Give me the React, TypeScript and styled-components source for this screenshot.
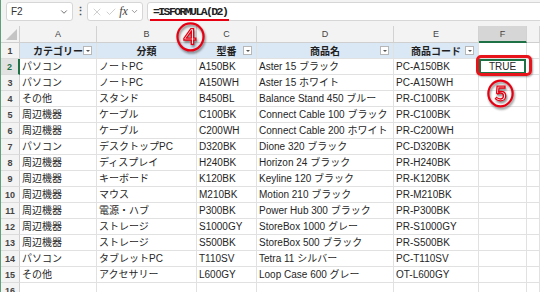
import styled, { createGlobalStyle } from "styled-components";
import { X, Check, ChevronDown } from "lucide-react";

const GlobalStyle = createGlobalStyle`
  html, body {
    margin: 0;
    padding: 0;
    background: #fff;
  }
  body {
    font-family: "Liberation Sans", "Noto Sans CJK JP", sans-serif;
    color: #222;
  }
`;

const Sheet = styled.div`
  position: relative;
  width: 540px;
  height: 292px;
  overflow: hidden;
  background: #fff;
  border-left: 1px solid #5f9f7c;
  box-sizing: border-box;
`;

const Toolbar = styled.div`
  display: flex;
  align-items: center;
  height: 26px;
  padding: 0 0 3px 5px;
  box-sizing: border-box;
  background: #f3f3f3;
  overflow: hidden;
`;

const Box = styled.div<{ $width?: number }>`
  display: flex;
  align-items: center;
  height: 19px;
  box-sizing: border-box;
  background: #fff;
  border: 1px solid #d6d6d6;
  border-radius: 3px;
  ${(p) => (p.$width ? `width: ${p.$width}px;` : "flex: 1; margin-right: -6px;")}
`;

const NameText = styled.span`
  flex: 1;
  padding-left: 4px;
  font-size: 10px;
  color: #333;
`;

const Dots = styled.span`
  width: 14px;
  text-align: center;
  font-size: 11px;
  font-weight: bold;
  color: #555;
`;

const FuncBox = styled(Box)`
  justify-content: space-around;
  padding: 0 2px;
  color: #b5b5b5;
`;

const FormulaBox = styled(Box)`
  margin-left: 4px;
`;

const Fx = styled.span`
  font-family: "Liberation Serif", serif;
  font-style: italic;
  font-size: 12px;
  color: #444;
`;

const Formula = styled.span`
  position: relative;
  margin-left: 5px;
  font-family: "Liberation Mono", monospace;
  font-weight: bold;
  font-size: 11.5px;
  letter-spacing: -1.6px;
  color: #222;
`;

const Underline = styled.span`
  position: absolute;
  left: -3px;
  right: -2px;
  bottom: -3px;
  height: 2px;
  background: #e60012;
`;

const Grid = styled.div`
  display: grid;
  grid-template-columns: 19px 77px 100px 60px 137px 85px 48px 1fr;
  grid-template-rows: 17px;
  grid-auto-rows: 16px;
`;

const Cell = styled.div`
  box-sizing: border-box;
  border-right: 1px solid #e1e1e1;
  border-bottom: 1px solid #e1e1e1;
  padding-left: 2px;
  font-size: 10px;
  line-height: 15px;
  white-space: nowrap;
  overflow: hidden;
  color: #262626;
`;

const Corner = styled.div`
  position: relative;
  box-sizing: border-box;
  background: #f3f3f3;
  border-right: 1px solid #cfcfcf;
  border-bottom: 1px solid #cfcfcf;
  &::after {
    content: "";
    position: absolute;
    right: 2px;
    bottom: 2px;
    border-left: 11px solid transparent;
    border-bottom: 11px solid #c4c4c4;
  }
`;

const ColHead = styled.div<{ $active?: boolean }>`
  box-sizing: border-box;
  display: flex;
  align-items: center;
  justify-content: center;
  font-size: 9px;
  color: #444;
  background: ${(p) => (p.$active ? "#d6d6d6" : "#f3f3f3")};
  border-right: 1px solid #d2d2d2;
  border-bottom: ${(p) => (p.$active ? "2px solid #1e7145" : "1px solid #cfcfcf")};
`;

const RowHead = styled.div<{ $active?: boolean }>`
  box-sizing: border-box;
  display: flex;
  align-items: center;
  justify-content: center;
  font-size: 9px;
  font-weight: bold;
  color: ${(p) => (p.$active ? "#1e7145" : "#444")};
  background: ${(p) => (p.$active ? "#e2e2e2" : "#f3f3f3")};
  border-bottom: 1px solid #dcdcdc;
  border-right: ${(p) => (p.$active ? "2px solid #1e7145" : "1px solid #cfcfcf")};
`;

const HeadCell = styled.div`
  box-sizing: border-box;
  display: grid;
  grid-template-columns: 13px 1fr 13px;
  align-items: center;
  background: #dae7f5;
  border-right: 1px solid #e1e1e1;
  border-bottom: 1px solid #e1e1e1;
  font-size: 10px;
  font-weight: bold;
  color: #1f1f1f;
  white-space: nowrap;
`;

const HeadLabel = styled.span`
  grid-column: 2;
  text-align: center;
`;

const Filter = styled.span`
  grid-column: 3;
  width: 9px;
  height: 9px;
  box-sizing: border-box;
  background: #fff;
  border: 1px solid #b7b7b7;
  display: flex;
  align-items: center;
  justify-content: center;
  &::after {
    content: "";
    border-left: 2px solid transparent;
    border-right: 2px solid transparent;
    border-top: 2px solid #555;
  }
`;

const ValueCell = styled(Cell)`
  text-align: center;
  padding-left: 0;
  box-shadow: inset 0 0 0 2px #1e7145;
  border-color: transparent;
`;

const Highlight = styled.div`
  position: absolute;
  left: 475px;
  top: 55px;
  width: 56px;
  height: 21px;
  box-sizing: border-box;
  border: 3px solid #e8141b;
  border-radius: 5px;
  box-shadow: 1px 1px 2px rgba(0, 0, 0, 0.35);
`;

const Badge = styled.span<{ $x: number; $y: number; $size: number }>`
  position: absolute;
  left: ${(p) => p.$x}px;
  top: ${(p) => p.$y}px;
  font-family: "Noto Sans CJK JP", sans-serif;
  font-size: ${(p) => p.$size}px;
  line-height: 1;
  color: #fff;
  -webkit-text-stroke: 1.3px #e60012;
  filter: drop-shadow(1px 2px 1px rgba(0, 0, 0, 0.45));
`;

const columns = ["A", "B", "C", "D", "E", "F", ""];

const headers: [string, boolean][] = [
  ["カテゴリー", true],
  ["分類", false],
  ["型番", true],
  ["商品名", true],
  ["商品コード", true],
];

const rows = [
  ["パソコン", "ノートPC", "A150BK", "Aster 15 ブラック", "PC-A150BK"],
  ["パソコン", "ノートPC", "A150WH", "Aster 15 ホワイト", "PC-A150WH"],
  ["その他", "スタンド", "B450BL", "Balance Stand 450 ブルー", "PR-C100BK"],
  ["周辺機器", "ケーブル", "C100BK", "Connect Cable 100 ブラック", "PR-C100BK"],
  ["周辺機器", "ケーブル", "C200WH", "Connect Cable 200 ホワイト", "PR-C200WH"],
  ["パソコン", "デスクトップPC", "D320BK", "Dione 320 ブラック", "PC-D320BK"],
  ["周辺機器", "ディスプレイ", "H240BK", "Horizon 24 ブラック", "PR-H240BK"],
  ["周辺機器", "キーボード", "K120BK", "Keyline 120 ブラック", "PR-K120BK"],
  ["周辺機器", "マウス", "M210BK", "Motion 210 ブラック", "PR-M210BK"],
  ["周辺機器", "電源・ハブ", "P300BK", "Power Hub 300 ブラック", "PR-P300BK"],
  ["周辺機器", "ストレージ", "S1000GY", "StoreBox 1000 グレー", "PR-S1000GY"],
  ["周辺機器", "ストレージ", "S500BK", "StoreBox 500 ブラック", "PR-S500BK"],
  ["パソコン", "タブレットPC", "T110SV", "Tetra 11 シルバー", "PC-T110SV"],
  ["その他", "アクセサリー", "L600GY", "Loop Case 600 グレー", "OT-L600GY"],
];

export default function App() {
  return (
    <>
      <GlobalStyle />
      <Sheet>
        <Toolbar>
          <Box $width={67}>
            <NameText>F2</NameText>
            <ChevronDown size={10} color="#555" style={{ marginRight: 3 }} />
          </Box>
          <Dots>⋮</Dots>
          <FuncBox $width={56}>
            <X size={12} strokeWidth={1.3} />
            <Check size={12} strokeWidth={1.3} />
            <Fx>fx</Fx>
            <ChevronDown size={9} color="#777" />
          </FuncBox>
          <FormulaBox>
            <Formula>
              =ISFORMULA(D2)
              <Underline />
            </Formula>
          </FormulaBox>
        </Toolbar>

        <Grid>
          <Corner />
          {columns.map((c, i) => (
            <ColHead key={i} $active={c === "F"}>
              {c}
            </ColHead>
          ))}

          <RowHead>1</RowHead>
          {headers.map(([label, filter]) => (
            <HeadCell key={label}>
              <HeadLabel>{label}</HeadLabel>
              {filter && <Filter />}
            </HeadCell>
          ))}
          <Cell />
          <Cell />

          {rows.map((r, i) => (
            <>
              <RowHead key={`h${i}`} $active={i === 0}>
                {i + 2}
              </RowHead>
              {r.map((v, j) => (
                <Cell key={`${i}-${j}`}>{v}</Cell>
              ))}
              {i === 0 ? <ValueCell>TRUE</ValueCell> : <Cell />}
              <Cell />
            </>
          ))}

          <RowHead>16</RowHead>
          {columns.map((_, i) => (
            <Cell key={`e${i}`} />
          ))}
        </Grid>

        <Highlight />
        <Badge $x={175} $y={21} $size={29}>
          ④
        </Badge>
        <Badge $x={486} $y={79} $size={27}>
          ⑤
        </Badge>
      </Sheet>
    </>
  );
}
